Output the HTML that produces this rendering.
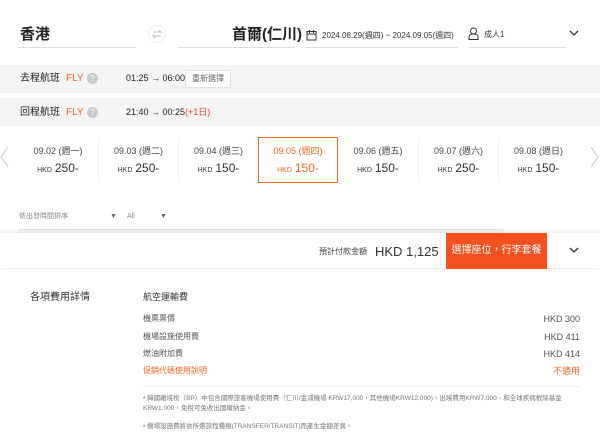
<!DOCTYPE html>
<html><head><meta charset="utf-8"><style>
*{margin:0;padding:0;box-sizing:border-box}
body{width:600px;height:442px;overflow:hidden;background:#fff;font-family:"Liberation Sans","Noto Sans CJK TC",sans-serif;color:#222;position:relative;line-height:1}
.a{position:absolute;white-space:nowrap;line-height:1}
.ul{position:absolute;height:1px;background:#ddd}
.band{position:absolute;left:0;width:600px;background:#f4f4f4}
.or{color:#f26522}
.q{position:absolute;width:11px;height:11px;border-radius:50%;background:#c8c8c8;color:#fff;font-size:8px;text-align:center;line-height:11px}
.card{position:absolute;top:138px;width:80px;height:45px;text-align:center;font-size:9px;color:#444}
.card .d{position:absolute;left:0;right:0;top:9px;line-height:1}
.card .p{position:absolute;left:0;right:0;top:24px;font-size:12px;color:#333;line-height:1}
.card .p small{font-size:7px;margin-right:3px}
.row{position:absolute;left:143px;width:437px;font-size:8px;color:#555;line-height:1}
.row span{position:absolute;right:0;top:0;font-size:9px;color:#555}
</style></head><body>
<div class="a" style="left:20px;top:27px;font-size:15px;font-weight:bold">香港</div>
<div class="ul" style="left:18px;top:47px;width:118px"></div>
<svg class="a" style="left:148px;top:25px" width="18" height="18"><circle cx="9" cy="9" r="8.5" fill="#fff" stroke="#eee"/><path d="M5 7h8l-2-2M13 11H5l2 2" stroke="#bbb" fill="none" stroke-width="1"/></svg>
<div class="a" style="left:232px;top:27px;font-size:15px;font-weight:bold">首爾(仁川)</div>
<div class="ul" style="left:178px;top:47px;width:117px"></div>
<svg class="a" style="left:306px;top:29px" width="11" height="12"><rect x="1" y="2.5" width="9" height="8.5" fill="none" stroke="#333"/><path d="M1 5h9M3.5 1v3M7.5 1v3" stroke="#333"/></svg>
<div class="a" style="left:322px;top:32px;font-size:8px;color:#333">2024.08.29(週四) ~ 2024.09.05(週四)</div>
<div class="ul" style="left:306px;top:47px;width:152px"></div>
<svg class="a" style="left:468px;top:27px" width="11" height="13"><circle cx="5.5" cy="4" r="3" fill="none" stroke="#333"/><path d="M1 12.5v-2.5c0-2 2-3 4.5-3s4.5 1 4.5 3v2.5z" fill="none" stroke="#333"/></svg>
<div class="a" style="left:484px;top:31px;font-size:8px;color:#333">成人1</div>
<div class="ul" style="left:469px;top:47px;width:97px"></div>
<svg class="a" style="left:569px;top:30px" width="10" height="7"><path d="M1 1l4 4 4-4" stroke="#333" fill="none" stroke-width="1.3"/></svg>

<div class="band" style="top:65px;height:28px"></div>
<div class="a" style="left:20px;top:74px;font-size:10px">去程航班</div>
<div class="a or" style="left:66px;top:74px;font-size:10px">FLY</div>
<div class="q" style="left:87px;top:73px">?</div>
<div class="a" style="left:126px;top:74px;font-size:9px">01:25 → 06:00</div>
<div class="a" style="left:185px;top:70px;width:46px;height:18px;background:#fff;border:1px solid #e4e4e4;font-size:8px;color:#666;text-align:center;line-height:16px">重新選擇</div>
<div class="band" style="top:98px;height:28px"></div>
<div class="a" style="left:20px;top:108px;font-size:10px">回程航班</div>
<div class="a or" style="left:66px;top:108px;font-size:10px">FLY</div>
<div class="q" style="left:87px;top:107px">?</div>
<div class="a" style="left:126px;top:108px;font-size:9px">21:40 → 00:25<span style="color:#e8452c">(+1日)</span></div>

<svg class="a" style="left:0;top:146px" width="9" height="22"><path d="M8 1L1 11l7 10" stroke="#ccc" fill="none"/></svg>
<svg class="a" style="left:590px;top:146px" width="9" height="22"><path d="M1 1l7 10-7 10" stroke="#ccc" fill="none"/></svg>
<div class="card" style="left:18px"><div class="d">09.02 (週一)</div><div class="p"><small>HKD</small>250-</div></div>
<div class="card" style="left:98px;border-left:1px solid #f0f0f0"><div class="d">09.03 (週二)</div><div class="p"><small>HKD</small>250-</div></div>
<div class="card" style="left:178px;border-left:1px solid #f0f0f0"><div class="d">09.04 (週三)</div><div class="p"><small>HKD</small>150-</div></div>
<div class="card" style="left:258px;border:1.5px solid #f26522;top:137px;height:46px;color:#f26522"><div class="d">09.05 (週四)</div><div class="p" style="color:#f26522"><small>HKD</small>150-</div></div>
<div class="card" style="left:338px"><div class="d">09.06 (週五)</div><div class="p"><small>HKD</small>150-</div></div>
<div class="card" style="left:418px;border-left:1px solid #f0f0f0"><div class="d">09.07 (週六)</div><div class="p"><small>HKD</small>250-</div></div>
<div class="card" style="left:498px;border-left:1px solid #f0f0f0"><div class="d">09.08 (週日)</div><div class="p"><small>HKD</small>150-</div></div>

<div class="a" style="left:19px;top:213px;font-size:7px;color:#888">依出發時間排序</div>
<div class="a" style="left:110px;top:213px;font-size:7px;color:#666">▼</div>
<div class="a" style="left:127px;top:213px;font-size:7px;color:#888">All</div>
<div class="a" style="left:160px;top:213px;font-size:7px;color:#666">▼</div>
<div class="a" style="left:19px;top:229px;width:484px;height:10px;border:1px solid #e4e4e4;background:#fafafa"></div>

<div class="a" style="left:0;top:233px;width:600px;height:36px;background:#fff;box-shadow:0 -2px 4px rgba(0,0,0,.08);border-bottom:1px solid #eee"></div>
<div class="a" style="left:319px;top:248px;font-size:8px;color:#444">預計付款金額</div>
<div class="a" style="left:375px;top:245px;font-size:13px;color:#333">HKD 1,125</div>
<div class="a" style="left:446px;top:233px;width:101px;height:36px;background:#f4511e;color:#fff;font-size:10px;text-align:center;line-height:36px">選擇座位，行李套餐</div>
<svg class="a" style="left:569px;top:247px" width="10" height="7"><path d="M1 1l4 4 4-4" stroke="#333" fill="none" stroke-width="1.3"/></svg>

<div class="a" style="left:30px;top:293px;font-size:10px;color:#333">各項費用詳情</div>
<div class="a" style="left:143px;top:293px;font-size:9px;color:#333">航空運輸費</div>
<div class="row" style="top:315px">機票票價<span>HKD 300</span></div>
<div class="row" style="top:333px">機場設施使用費<span>HKD 411</span></div>
<div class="row" style="top:350px">燃油附加費<span>HKD 414</span></div>
<div class="row or" style="top:367px;color:#f26522">促銷代碼使用說明<span style="color:#f26522">不適用</span></div>
<div class="ul" style="left:143px;top:386px;width:437px;background:#eee"></div>
<div class="a" style="left:143px;top:394px;font-size:6.5px;color:#777;line-height:10px;white-space:normal;width:437px"><span class="or">•</span> 韓國離境稅（BP）中包含國際旅客機場使用費（仁川/金浦機場 KRW17,000，其他機場KRW12,000)、出境費用KRW7,000、和全球疾病根除基金KRW1,000，免稅可免收出國繳納金。</div>
<div class="a" style="left:143px;top:424px;font-size:6.5px;color:#777"><span class="or">•</span> 機場設施費將依所選旅程種類(TRANSFER/TRANSIT)而產生金額差異。</div>
</body></html>
